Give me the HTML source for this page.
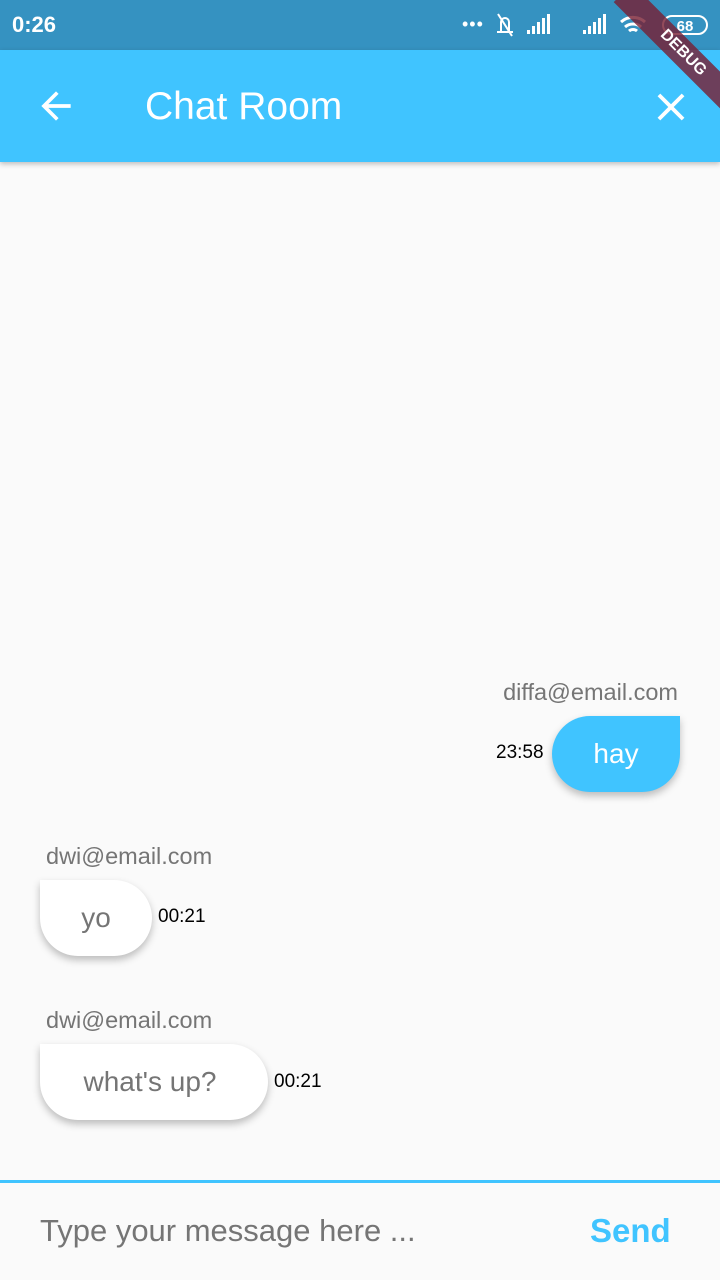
<!DOCTYPE html>
<html><head><meta charset="utf-8"><style>
*{margin:0;padding:0;box-sizing:border-box}
body{width:720px;height:1280px;background:#fafafa;font-family:"Liberation Sans",sans-serif;position:relative;overflow:hidden}
.abs{position:absolute}
.sb{top:0;left:0;width:720px;height:50px;background:#3592c1;color:#fff}
.ab{top:50px;left:0;width:720px;height:112px;background:#40c4ff;box-shadow:0 2px 5px rgba(0,0,0,.25);color:#fff}
.bub{position:absolute;height:76px;border-radius:38px;box-shadow:0 4px 8px rgba(0,0,0,.25);font-size:28px;line-height:76px;text-align:center}
.em{position:absolute;font-size:23.5px;color:#757575}
.t{position:absolute;font-size:19px;color:#000}
</style></head><body>
<div class="abs sb">
 <div class="abs" style="left:12px;top:12px;font-size:22px;font-weight:bold">0:26</div>
 <div class="abs" style="left:462px;top:14px;font-size:18px;letter-spacing:1px">•••</div>
 <svg class="abs" style="left:493px;top:12px" width="230" height="26" viewBox="0 0 230 26" fill="#fff">
  <path d="M4 20h16M8 20V10a4 4 0 0 1 8 0v10M5 2l14 22" stroke="#fff" stroke-width="2" fill="none"/>
  <rect x="34" y="18" width="3" height="4"/><rect x="39" y="14" width="3" height="8"/><rect x="44" y="10" width="3" height="12"/><rect x="49" y="6" width="3" height="16"/><rect x="54" y="2" width="3" height="20"/>
  <rect x="90" y="18" width="3" height="4"/><rect x="95" y="14" width="3" height="8"/><rect x="100" y="10" width="3" height="12"/><rect x="105" y="6" width="3" height="16"/><rect x="110" y="2" width="3" height="20"/>
  <path d="M128 10a18 18 0 0 1 24 0M132 15a12 12 0 0 1 16 0M136 19a6 6 0 0 1 8 0" stroke="#fff" stroke-width="3" fill="none"/>
  <rect x="170" y="4" width="44" height="18" rx="9" stroke="#fff" stroke-width="2" fill="none"/>
  <text x="192" y="19" font-size="15" font-weight="bold" text-anchor="middle" fill="#fff" font-family="Liberation Sans">68</text>
 </svg>
</div>
<div class="abs ab">
 <svg class="abs" style="left:34px;top:34px" width="44" height="44" viewBox="0 0 24 24"><path d="M20 11H7.83l5.59-5.59L12 4l-8 8 8 8 1.41-1.41L7.83 13H20v-2z" fill="#fff"/></svg>
 <div class="abs" style="left:145px;top:35px;font-size:39px">Chat Room</div>
 <svg class="abs" style="left:648px;top:34px" width="46" height="46" viewBox="0 0 24 24"><path d="M19 6.41L17.59 5 12 10.59 6.41 5 5 6.41 10.59 12 5 17.59 6.41 19 12 13.41 17.59 19 19 17.59 13.41 12z" fill="#fff"/></svg>
</div>
<div class="abs" style="left:598px;top:40px;width:170px;height:26px;background:rgba(120,30,50,.8);transform:rotate(45deg);color:#fff;font-size:16px;font-weight:bold;text-align:center;line-height:26px">DEBUG</div>

<div class="em" style="right:42px;top:679px">diffa@email.com</div>
<div class="t" style="left:496px;top:742px">23:58</div>
<div class="bub" style="left:552px;top:716px;width:128px;background:#40c4ff;color:#fff;border-top-right-radius:0">hay</div>

<div class="em" style="left:46px;top:843px">dwi@email.com</div>
<div class="bub" style="left:40px;top:880px;width:112px;background:#fff;color:#757575;border-top-left-radius:0">yo</div>
<div class="t" style="left:158px;top:906px">00:21</div>

<div class="em" style="left:46px;top:1007px">dwi@email.com</div>
<div class="bub" style="left:40px;top:1044px;width:228px;background:#fff;color:#757575;border-top-left-radius:0;padding-right:8px">what's up?</div>
<div class="t" style="left:274px;top:1071px">00:21</div>

<div class="abs" style="left:0;top:1180px;width:720px;height:3px;background:#40c4ff"></div>
<div class="abs" style="left:40px;top:1213px;font-size:31px;color:#757575">Type your message here ...</div>
<div class="abs" style="left:590px;top:1212px;font-size:33px;font-weight:bold;color:#40c4ff">Send</div>
</body></html>
